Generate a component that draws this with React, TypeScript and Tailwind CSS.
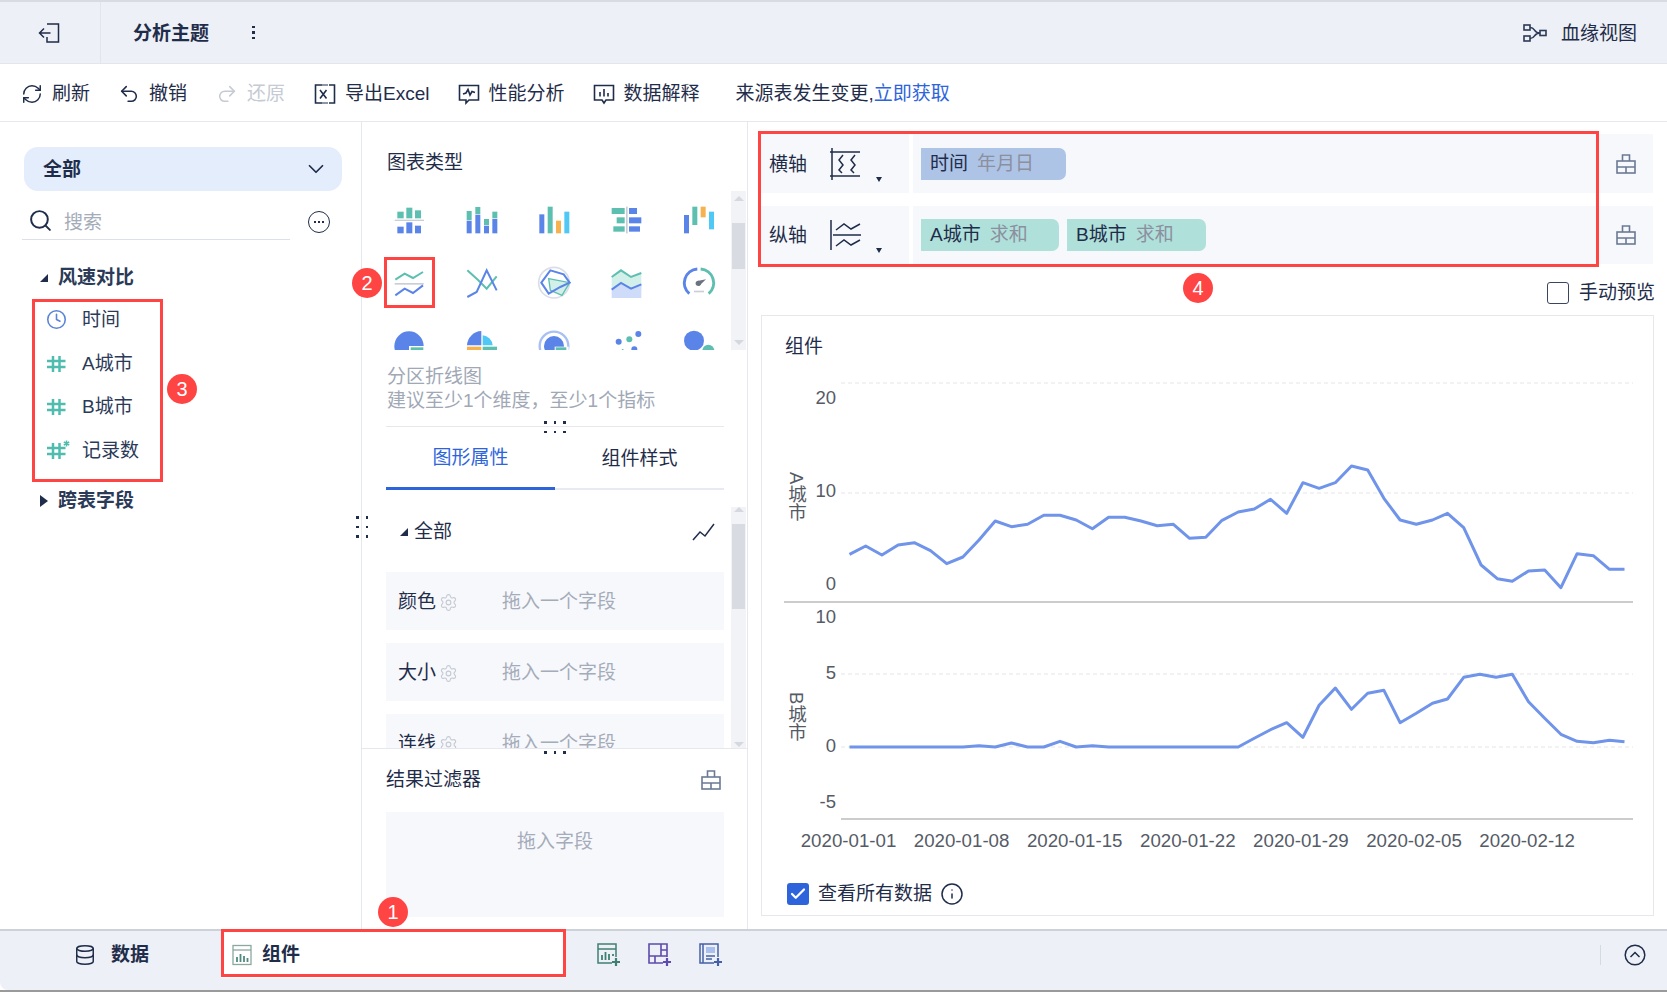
import React from 'react';
import { RefreshCw, Undo2, Redo2, ChevronDown, Search, Clock, Database, Info, Check, Settings } from 'lucide-react';

const BLUE = '#5b84e8';
const TEAL = '#5dbfb0';
const ORANGE = '#f6b24e';
const SKY = '#4fc8f5';

function Ic({ cx, cy, children }: { cx: number; cy: number; children: React.ReactNode }) {
  return (
    <div className="flex items-center justify-center">
      <svg width="40" height="40" viewBox={`${cx - 60} ${cy - 60} 120 120`} fill="none">
        {children}
      </svg>
    </div>
  );
}

function R({ x, y, x2, y2, c }: { x: number; y: number; x2: number; y2: number; c: string }) {
  return <rect x={x} y={y} width={x2 - x} height={y2 - y} fill={c} />;
}

const chartIcons = (
  <>
    <Ic cx={148} cy={270}>
      <R x={113} y={245} x2={132} y2={265} c={TEAL} />
      <R x={140} y={233} x2={158} y2={265} c={TEAL} />
      <R x={166} y={241} x2={184} y2={265} c={TEAL} />
      <R x={105} y={269} x2={193} y2={273} c="#c9ced8" />
      <R x={113} y={290} x2={132} y2={310} c={BLUE} />
      <R x={140} y={277} x2={158} y2={310} c={BLUE} />
      <R x={166} y={287} x2={184} y2={310} c={BLUE} />
    </Ic>
    <Ic cx={366} cy={270}>
      <R x={320} y={243} x2={335} y2={270} c={TEAL} />
      <R x={320} y={272} x2={335} y2={310} c={BLUE} />
      <R x={346} y={231} x2={361} y2={252} c={TEAL} />
      <R x={346} y={254} x2={361} y2={310} c={BLUE} />
      <R x={372} y={267} x2={387} y2={285} c={TEAL} />
      <R x={372} y={287} x2={387} y2={310} c={BLUE} />
      <R x={397} y={245} x2={412} y2={265} c={TEAL} />
      <R x={397} y={267} x2={412} y2={310} c={BLUE} />
    </Ic>
    <Ic cx={581} cy={270}>
      <R x={537} y={253} x2={552} y2={310} c={BLUE} />
      <R x={562} y={230} x2={577} y2={310} c={TEAL} />
      <R x={587} y={272} x2={602} y2={310} c={ORANGE} />
      <R x={612} y={245} x2={627} y2={310} c={SKY} />
    </Ic>
    <Ic cx={803} cy={270}>
      <R x={800} y={230} x2={805} y2={310} c="#c9ced8" />
      <R x={757} y={234} x2={796} y2={252} c={TEAL} />
      <R x={772} y={262} x2={796} y2={280} c={TEAL} />
      <R x={762} y={289} x2={796} y2={305} c={TEAL} />
      <R x={809} y={234} x2={833} y2={252} c={BLUE} />
      <R x={809} y={262} x2={846} y2={280} c={BLUE} />
      <R x={809} y={289} x2={842} y2={305} c={BLUE} />
    </Ic>
    <Ic cx={1017} cy={270}>
      <R x={972} y={255} x2={987} y2={310} c={BLUE} />
      <R x={997} y={230} x2={1012} y2={285} c={TEAL} />
      <R x={1022} y={230} x2={1037} y2={262} c={ORANGE} />
      <R x={1047} y={245} x2={1062} y2={298} c={SKY} />
    </Ic>

    <Ic cx={148} cy={458}>
      <polyline points="107,448 135,430 160,443 190,425" stroke={TEAL} strokeWidth="6" />
      <R x={105} y={458} x2={192} y2={463} c="#c9ced8" />
      <polyline points="107,495 135,475 160,488 190,465" stroke={BLUE} strokeWidth="6" />
    </Ic>
    <Ic cx={366} cy={458}>
      <polyline points="322,420 355,450 380,475 410,438" stroke={TEAL} strokeWidth="6" />
      <polyline points="322,500 350,485 380,420 410,480" stroke={BLUE} strokeWidth="6" />
    </Ic>
    <Ic cx={581} cy={458}>
      <circle cx={581} cy={457} r={46} stroke="#d9dee8" strokeWidth="5" />
      <polygon points="565,445 628,457 605,495 570,480" fill="#d3efe9" stroke={TEAL} strokeWidth="4" />
      <polygon points="543,457 570,420 610,432 628,457 600,470 565,490" stroke={BLUE} strokeWidth="6" />
    </Ic>
    <Ic cx={803} cy={458}>
      <polygon points="757,440 785,420 815,440 846,428 846,478 757,478" fill="#d3efe9" />
      <polyline points="757,440 785,420 815,440 846,428" stroke={TEAL} strokeWidth="6" />
      <polygon points="757,478 785,458 815,475 846,462 846,503 757,503" fill="#cfdcf9" />
      <polyline points="757,478 785,458 815,475 846,462" stroke={BLUE} strokeWidth="6" />
    </Ic>
    <Ic cx={1017} cy={458}>
      <path d="M988 490 A42 42 0 0 1 1012 416" stroke={BLUE} strokeWidth="9" />
      <path d="M1022 416 A42 42 0 0 1 1046 490" stroke={TEAL} strokeWidth="9" />
      <circle cx={1015} cy={459} r={8} fill="#6b7280" />
      <path d="M1012 452 L1038 447 L1018 466 Z" fill="#6b7280" />
      <R x={1002} y={481} x2={1032} y2={486} c="#c9ced8" />
    </Ic>

    <Ic cx={148} cy={648}>
      <circle cx={148} cy={648} r={44} fill={BLUE} />
      <rect x={148} y={648} width={46} height={46} fill="#fff" />
      <rect x={153} y={652} width={38} height={30} fill={TEAL} />
    </Ic>
    <Ic cx={366} cy={648}>
      <path d="M364 646 V603 A45 45 0 0 0 321 646 Z" fill={BLUE} />
      <path d="M368 646 V616 A32 32 0 0 1 398 646 Z" fill={SKY} />
      <path d="M321 650 H364 V697 H321 Z" fill={ORANGE} />
      <path d="M368 650 H411 V697 H368 Z" fill={TEAL} />
    </Ic>
    <Ic cx={581} cy={648}>
      <circle cx={581} cy={648} r={43} stroke="#a9c0f3" strokeWidth="7" />
      <circle cx={581} cy={648} r={30} fill={BLUE} />
      <rect x={583} y={650} width={42} height={40} fill="#fff" />
      <rect x={586} y={652} width={32} height={30} fill={TEAL} />
    </Ic>
    <Ic cx={803} cy={648}>
      <circle cx={778} cy={635} r={9} fill={BLUE} />
      <circle cx={810} cy={628} r={9} fill={TEAL} />
      <circle cx={837} cy={612} r={9} fill={BLUE} />
      <circle cx={825} cy={658} r={9} fill={BLUE} />
      <circle cx={790} cy={660} r={3} fill={TEAL} />
    </Ic>
    <Ic cx={1017} cy={648}>
      <circle cx={1002} cy={632} r={30} fill={BLUE} />
      <circle cx={1045} cy={662} r={18} fill={TEAL} />
    </Ic>
  </>
);

function Case({ className = 'text-[#6b7a94]' }: { className?: string }) {
  return (
    <svg width="22" height="22" viewBox="0 0 22 22" fill="none" stroke="currentColor" strokeWidth="1.6" className={className}>
      <rect x="2" y="8" width="18" height="12" />
      <path d="M7.500 8V2h7v6M2 14h18M11 14v6" />
    </svg>
  );
}

function Dots({ cols, rows }: { cols: number; rows: number }) {
  const items = [];
  for (let i = 0; i < cols * rows; i++) items.push(<span key={i} className="w-[2.5px] h-[2.5px] bg-[#1f2d4a]" />);
  return (
    <div className="grid gap-x-[7px] gap-y-[7px]" style={{ gridTemplateColumns: `repeat(${cols}, 2.5px)` }}>
      {items}
    </div>
  );
}

function Scrollbar({ h, top, thumb }: { h: number; top: number; thumb: number }) {
  return (
    <div className="relative w-[15px] shrink-0 bg-[#f2f3f6]" style={{ height: h }}>
      <div className="mx-auto mt-[5px] w-0 h-0 border-x-[5px] border-x-transparent border-b-[5px] border-b-[#d5d8de]" />
      <div className="absolute left-[1px] w-[13px] bg-[#d8dbe1]" style={{ top, height: thumb }} />
      <div className="absolute bottom-[5px] left-[2.5px] w-0 h-0 border-x-[5px] border-x-transparent border-t-[5px] border-t-[#d5d8de]" />
    </div>
  );
}

function ToolIcon({ children }: { children: React.ReactNode }) {
  return (
    <svg width="22" height="22" viewBox="0 0 22 22" fill="none" stroke="#1f2d4a" strokeWidth="1.6">
      {children}
    </svg>
  );
}

function ToolItem({ icon, label, muted, extra }: { icon: React.ReactNode; label: string; muted?: boolean; extra?: string }) {
  return (
    <div className={`flex items-center gap-[9px] ${extra ?? ''}`}>
      <span className="w-[22px] h-[22px] flex items-center justify-center">{icon}</span>
      <span className={muted ? 'text-[#c5cad3]' : ''}>{label}</span>
    </div>
  );
}

function Hash({ star }: { star?: boolean }) {
  return (
    <svg width="24" height="22" viewBox="0 0 24 22" fill="none" stroke="#4fbdae" strokeWidth="2.5">
      <path d="M7 3v16M13.500 3v16M1 8h18.500M1 14h18.500" />
      {star && <path d="M20.500 0.500v6M17.800 2l5.400 3M23.200 2l-5.400 3" strokeWidth="1.500" />}
    </svg>
  );
}

function FieldRow({ icon, label }: { icon: React.ReactNode; label: string }) {
  return (
    <div className="h-[43.8px] flex items-center">
      <span className="ml-[46px] w-[36px] flex items-center">{icon}</span>
      <span className="text-[#2b3a57]">{label}</span>
    </div>
  );
}

function PropRow({ label }: { label: string }) {
  return (
    <div className="h-[58px] shrink-0 bg-[#f7f8fc] flex items-center pl-[12px] pt-[2px]">
      <span className="w-[41px]">{label}</span>
      <Settings size={19} strokeWidth={1.4} className="text-[#c5cad3]" />
      <span className="ml-[44px] text-[#a5acb9]">拖入一个字段</span>
    </div>
  );
}

function Pill({ a, b, w, color }: { a: string; b: string; w: number; color: string }) {
  return (
    <div className="h-[32px] flex items-center pl-[9px] gap-[9px] rounded-r-[7px]" style={{ width: w, backgroundColor: color }}>
      <span>{a}</span>
      <span className="text-[#8b8f9e]">{b}</span>
    </div>
  );
}

function AxisRow({ label, icon, h, children }: { label: string; icon: React.ReactNode; h: number; children: React.ReactNode }) {
  return (
    <div className="flex w-[894px] bg-[#f7f8fc]" style={{ height: h }}>
      <div className="w-[150px] shrink-0 flex items-center pl-[10px] relative">
        <span className="mt-[2px]">{label}</span>
        <span className="ml-[23px]">{icon}</span>
        <span className="absolute left-[117px] bottom-[11px] w-0 h-0 border-x-[3.5px] border-x-transparent border-t-[5px] border-t-[#1f2d4a]" />
      </div>
      <div className="w-[4px] shrink-0 bg-white" />
      <div className="flex-1 flex items-center pl-[8px] gap-[8px]">{children}</div>
      <div className="w-[54px] shrink-0 flex items-center justify-center">
        <Case />
      </div>
    </div>
  );
}

const dataA: [number, number][] = [
  [153, 703], [181, 678], [209, 705], [237, 675], [265, 668], [293, 692], [321, 731], [349, 711], [377, 660], [405, 603],
  [433, 620], [461, 613], [489, 586], [517, 586], [545, 600], [573, 626], [601, 592], [629, 592], [657, 603], [685, 617],
  [713, 613], [741, 655], [769, 652], [797, 601], [825, 576], [853, 567], [881, 538], [909, 580], [937, 488], [965, 505],
  [993, 488], [1021, 438], [1049, 450], [1077, 535], [1105, 600], [1133, 613], [1161, 600], [1187, 580], [1215, 623], [1245, 735],
  [1273, 776], [1299, 784], [1327, 753], [1355, 750], [1383, 803], [1411, 701], [1439, 707], [1467, 748], [1493, 748],
];
const dataB: [number, number][] = [
  [153, 441], [349, 441], [377, 437], [405, 441], [433, 429], [461, 441], [489, 441], [517, 424], [545, 441], [573, 437],
  [601, 441], [825, 441], [853, 415], [881, 389], [909, 368], [937, 412], [965, 316], [993, 264], [1021, 328], [1049, 280],
  [1077, 271], [1105, 368], [1133, 340], [1161, 310], [1187, 297], [1215, 232], [1243, 223], [1271, 232], [1299, 223], [1327, 305],
  [1355, 355], [1383, 403], [1411, 424], [1439, 428], [1467, 421], [1493, 425],
];
const fx = (x: number) => 760 + x / 1.729;
const ptsA = dataA.map(([x, y]) => `${fx(x).toFixed(1)},${(320 + y / 3).toFixed(1)}`).join(' ');
const ptsB = dataB.map(([x, y]) => `${fx(x).toFixed(1)},${(600 + y / 3).toFixed(1)}`).join(' ');
const dates = ['2020-01-01', '2020-01-08', '2020-01-15', '2020-01-22', '2020-01-29', '2020-02-05', '2020-02-12'];

function Chart() {
  const tick = (t: string, y: number) => (
    <text key={t + y} x={835} y={y + 6.5} textAnchor="end" fontSize="18.5" fill="#555b66">
      {t}
    </text>
  );
  const grid = (y: number) => <line key={y} x1={840} x2={1632} y1={y} y2={y} stroke="#e6e6e6" strokeWidth="1.2" strokeDasharray="4 3" />;
  return (
    <svg width="893" height="505" viewBox="761 365 893 505" className="block" fill="none" fontFamily="'Liberation Sans','Noto Sans CJK SC',sans-serif">
      {[383, 493, 674, 747].map(grid)}
      <line x1={783} x2={1632} y1={602} y2={602} stroke="#cccccc" strokeWidth="2" />
      <line x1={840} x2={1632} y1={819} y2={819} stroke="#cccccc" strokeWidth="2" />
      {tick('20', 397)}
      {tick('10', 490)}
      {tick('0', 583)}
      {tick('10', 616)}
      {tick('5', 672)}
      {tick('0', 745)}
      {tick('-5', 801)}
      <text x={795} y={472} fontSize="18.5" fill="#555b66" className="[writing-mode:vertical-rl]">A城市</text>
      <text x={795} y={692} fontSize="18.5" fill="#555b66" className="[writing-mode:vertical-rl]">B城市</text>
      <polyline points={ptsA} stroke="#6f94ea" strokeWidth="3" strokeLinejoin="round" />
      <polyline points={ptsB} stroke="#6f94ea" strokeWidth="3" strokeLinejoin="round" />
      {dates.map((d, i) => (
        <text key={d} x={847.5 + i * 113.1} y={846.5} textAnchor="middle" fontSize="18.7" fill="#555b66">
          {d}
        </text>
      ))}
    </svg>
  );
}

function RedBox({ x, y, w, h }: { x: number; y: number; w: number; h: number }) {
  return <div className="absolute border-[3px] border-[#ff4444] pointer-events-none" style={{ left: x, top: y, width: w, height: h }} />;
}

function Badge({ x, y, n }: { x: number; y: number; n: number }) {
  return (
    <div
      className="absolute w-[30px] h-[30px] rounded-full bg-[#ff4444] text-white flex items-center justify-center text-[20px] pointer-events-none"
      style={{ left: x - 15, top: y - 15 }}
    >
      {n}
    </div>
  );
}

export default function App() {
  return (
    <div className="relative w-[1667px] h-[992px] flex flex-col overflow-hidden bg-white text-[19px] leading-[24px] text-[#1f2d4a] font-['Liberation_Sans','Noto_Sans_CJK_SC',sans-serif]">
      {/* Top bar */}
      <div className="h-[64px] shrink-0 flex items-center bg-[#edf0f6] border-t-2 border-t-[#d8dce2] border-b border-b-[#e1e5ec]">
        <div className="w-[101px] h-full flex items-center justify-center border-r border-r-[#e1e5ec]">
          <svg width="24" height="24" viewBox="0 0 24 24" fill="none" stroke="#1f2d4a" strokeWidth="1.500">
            <path d="M9 3h11.500v18H9v-5M1.500 12h11M6 7.500L1.500 12 6 16.500" />
          </svg>
        </div>
        <span className="ml-[32px] mt-[2px] font-bold">分析主题</span>
        <div className="ml-[43px] flex flex-col gap-[3px]">
          <span className="w-[2.5px] h-[2.5px] bg-[#1f2d4a]" />
          <span className="w-[2.5px] h-[2.5px] bg-[#1f2d4a]" />
          <span className="w-[2.500px] h-[2.5px] bg-[#1f2d4a]" />
        </div>
        <div className="ml-auto mr-[30px] flex items-center gap-[14px]">
          <svg width="24" height="20" viewBox="0 0 24 20" fill="none" stroke="#2b3a57" strokeWidth="1.6">
            <rect x="1" y="2" width="6" height="5" />
            <rect x="1" y="13" width="6" height="5" />
            <rect x="17" y="7.500" width="6" height="5" />
            <path d="M7 4.500c6 0 3 5.500 10 5.500M7 15.500c6 0 3-5.500 10-5.500" />
          </svg>
          <span className="mt-[2px]">血缘视图</span>
        </div>
      </div>

      {/* Toolbar */}
      <div className="h-[58px] shrink-0 flex items-center gap-[28px] pl-[21px] pt-[3px] border-b border-b-[#e6e8ee]">
        <ToolItem icon={<RefreshCw size={24} strokeWidth={1.6} />} label="刷新" />
        <ToolItem icon={<Undo2 size={24} strokeWidth={1.7} />} label="撤销" />
        <ToolItem icon={<Redo2 size={24} strokeWidth={1.7} className="text-[#c5cad3]" />} label="还原" muted extra="ml-[1px]" />
        <ToolItem
          icon={
            <ToolIcon>
              <path d="M8 2H1.500v18H8M15 2h5.500v18H15" />
              <path d="M6 7l6.500 8.500M12.500 7L6 15.500" />
              <path d="M8 2h6M8 20h6" strokeWidth="1" />
            </ToolIcon>
          }
          label="导出Excel"
          extra="ml-[1px]"
        />
        <ToolItem
          icon={
            <ToolIcon>
              <path d="M1.500 2.500h19v14.500h-9.500l-3 3v-3H1.500z" />
              <path d="M5 11l3-1 2-3.500 2 5.500 2-3.500 3 1" />
            </ToolIcon>
          }
          label="性能分析"
        />
        <ToolItem
          icon={
            <ToolIcon>
              <path d="M1.500 2.500h19v14.500h-7.500l-2 3-2-3H1.500z" />
              <path d="M7 9v4.500M11 6v7.500M15 10v3.500" />
            </ToolIcon>
          }
          label="数据解释"
        />
        <span className="ml-[8px]">
          来源表发生变更,<span className="text-[#2d64dc]">立即获取</span>
        </span>
      </div>

      {/* Main */}
      <div className="flex-1 min-h-0 flex">
        {/* Left */}
        <div className="relative w-[362px] shrink-0 border-r border-r-[#e6e8ee] pt-[25px]">
          <div className="ml-[24px] w-[318px] h-[44px] rounded-[14px] bg-[#e4edfc] flex items-center justify-between pl-[19px] pr-[13px]">
            <span className="font-bold mt-[2px]">全部</span>
            <ChevronDown size={26} strokeWidth={1.6} />
          </div>
          <div className="flex items-center mt-[9px]">
            <div className="ml-[22px] w-[268px] h-[40px] border-b border-b-[#dde0e8] flex items-center pl-[6px] gap-[11px]">
              <Search size={25} strokeWidth={1.9} className="mt-[2px]" />
              <span className="text-[#a5acb9] mt-[6px]">搜索</span>
            </div>
            <div className="ml-[18px] mt-[4px] w-[22px] h-[22px] rounded-full border-[1.5px] border-[#1f2d4a] flex items-center justify-center gap-[2px]">
              <span className="w-[2px] h-[2px] bg-[#1f2d4a]" />
              <span className="w-[2px] h-[2px] bg-[#1f2d4a]" />
              <span className="w-[2px] h-[2px] bg-[#1f2d4a]" />
            </div>
          </div>
          <div className="mt-[18px] h-[40px] flex items-center">
            <span className="ml-[40px] w-0 h-0 border-l-[8px] border-l-transparent border-b-[8px] border-b-[#1f2d4a]" />
            <span className="ml-[10px] font-bold text-[#2b3a57]">风速对比</span>
          </div>
          <FieldRow icon={<Clock size={21} strokeWidth={1.8} className="text-[#5b84d8]" />} label="时间" />
          <FieldRow icon={<Hash />} label="A城市" />
          <FieldRow icon={<Hash />} label="B城市" />
          <FieldRow icon={<Hash star />} label="记录数" />
          <div className="mt-[6px] h-[44px] flex items-center">
            <span className="ml-[40px] w-0 h-0 border-y-[6px] border-y-transparent border-l-[8px] border-l-[#1f2d4a]" />
            <span className="ml-[10px] font-bold text-[#2b3a57]">跨表字段</span>
          </div>
          <div className="absolute left-[356px] top-[394px]">
            <Dots cols={2} rows={3} />
          </div>
        </div>

        {/* Middle */}
        <div className="relative w-[386px] shrink-0 border-r border-r-[#e6e8ee] flex flex-col">
          <div className="h-[69px] shrink-0 pl-[25px] pt-[29px]">图表类型</div>
          <div className="h-[159px] shrink-0 flex">
            <div className="w-[369px] h-[159px] overflow-hidden pl-[11px]">
              <div className="-mt-[3px] grid grid-cols-[repeat(5,72.5px)] auto-rows-[63px]">{chartIcons}</div>
            </div>
            <Scrollbar h={159} top={32} thumb={46} />
          </div>
          <div className="h-[76px] shrink-0 pl-[25px] pt-[15px] text-[#a0a8b6]">
            <div>分区折线图</div>
            <div>建议至少1个维度，至少1个指标</div>
          </div>
          <div className="ml-[24px] w-[338px] border-t border-t-[#e6e8ee] shrink-0" />
          <div className="absolute left-[182px] top-[299px]">
            <div className="grid grid-cols-[repeat(3,2.5px)] gap-x-[7px] gap-y-[7px]">
              {[0, 1, 2, 3, 4, 5].map((i) => (
                <span key={i} className="w-[2.5px] h-[2.5px] bg-[#1f2d4a]" />
              ))}
            </div>
          </div>
          <div className="ml-[24px] w-[338px] h-[63px] shrink-0 flex border-b-2 border-b-[#e8eaf2]">
            <div className="w-[169px] h-[63px] pt-[2px] flex items-center justify-center border-b-[3px] border-b-[#2d64dc] text-[#2d64dc]">图形属性</div>
            <div className="w-[169px] h-[61px] pt-[3px] flex items-center justify-center">组件样式</div>
          </div>
          <div className="h-[258px] shrink-0 flex overflow-hidden">
            <div className="ml-[24px] w-[338px] flex flex-col gap-[13px] overflow-hidden">
              <div className="h-[69px] shrink-0 flex items-center pl-[14px] pr-[8px] pt-[15px]">
                <span className="w-0 h-0 border-l-[8px] border-l-transparent border-b-[8px] border-b-[#1f2d4a]" />
                <span className="ml-[6px]">全部</span>
                <svg width="24" height="20" viewBox="0 0 24 20" fill="none" stroke="#1f2d4a" strokeWidth="1.5" className="ml-auto">
                  <path d="M1 18l7-8 5 4L22 2" />
                </svg>
              </div>
              <PropRow label="颜色" />
              <PropRow label="大小" />
              <PropRow label="连线" />
            </div>
            <div className="ml-[7px] mt-[12px]">
              <Scrollbar h={245} top={17} thumb={85} />
            </div>
          </div>
          <div className="flex-1 min-h-0 border-t border-t-[#e6e8ee] relative">
            <div className="ml-[24px] w-[338px] h-[61px] mb-[2px] flex items-center justify-between pr-[2px]">
              <span>结果过滤器</span>
              <Case />
            </div>
            <div className="ml-[24px] w-[338px] h-[105px] bg-[#f7f8fc] flex justify-center pt-[18px] text-[#a5acb9]">拖入字段</div>
            <div className="absolute left-[182px] top-[2px] flex gap-[7px]">
              <span className="w-[2.5px] h-[2.5px] bg-[#1f2d4a]" />
              <span className="w-[2.5px] h-[2.5px] bg-[#1f2d4a]" />
              <span className="w-[2.5px] h-[2.5px] bg-[#1f2d4a]" />
            </div>
          </div>
        </div>

        {/* Right */}
        <div className="flex-1 flex flex-col">
          <div className="pl-[11px] pt-[12px] flex flex-col gap-[13px]">
            <AxisRow
              h={59}
              label="横轴"
              icon={
                <svg width="32" height="34" viewBox="0 0 32 34" fill="none" stroke="#1f2d4a" strokeWidth="1.500">
                  <path d="M2 1v32M0 5h30M0 29h30" />
                  <path d="M13 8l-4 5 4 5-4 5 3 3M25 8l-4 5 4 5-4 5 3 3" />
                </svg>
              }
            >
              <Pill a="时间" b="年月日" w={145} color="#aec4e6" />
            </AxisRow>
            <AxisRow
              h={58}
              label="纵轴"
              icon={
                <svg width="32" height="32" viewBox="0 0 32 32" fill="none" stroke="#1f2d4a" strokeWidth="1.500">
                  <path d="M1 1v30M3 16h28" />
                  <path d="M6 11l8-6 7 5 9-5M6 27l8-6 7 5 9-5" />
                </svg>
              }
            >
              <Pill a="A城市" b="求和" w={138} color="#b0e0da" />
              <Pill a="B城市" b="求和" w={139} color="#b0e0da" />
            </AxisRow>
          </div>
          <div className="h-[51px] shrink-0 flex items-center justify-end pr-[12px] pt-[6px]">
            <span className="w-[22px] h-[22px] rounded-[3px] border-[1.5px] border-[#3a465f] mr-[10px]" />
            <span>手动预览</span>
          </div>
          <div className="ml-[13px] w-[893px] h-[601px] border border-[#e8e8ec] flex flex-col">
            <div className="h-[49px] shrink-0 pl-[23px] pt-[19px]">组件</div>
            <Chart />
            <div className="flex items-center mt-[12px] pl-[25px]">
              <span className="w-[22px] h-[22px] rounded-[3px] bg-[#2d64dc] flex items-center justify-center">
                <Check size={18} strokeWidth={3} className="text-white" />
              </span>
              <span className="ml-[9px]">查看所有数据</span>
              <Info size={24} strokeWidth={1.5} className="ml-[8px]" />
            </div>
          </div>
        </div>
      </div>

      {/* Bottom */}
      <div className="h-[61px] shrink-0 flex bg-[#edf0f6] border-t-2 border-t-[#cdd2da] rounded-bl-[8px]">
        <div className="w-[221px] h-[47px] flex items-center pl-[74px] gap-[15px] font-bold">
          <Database size={22} strokeWidth={1.6} />
          <span>数据</span>
        </div>
        <div className="w-[345px] h-[47px] bg-white flex items-center pl-[11px] gap-[10px] font-bold">
          <svg width="20" height="22" viewBox="0 0 20 22" fill="none" stroke="#4f8a7e" strokeWidth="1.3">
            <rect x="1" y="1.500" width="18" height="19" stroke="#8aa8a0" />
            <path d="M1 6h18" stroke="#8aa8a0" />
            <path d="M5 18v-5M8.500 18v-8M12 18v-6M15.500 18v-4" strokeWidth="1.800" />
          </svg>
          <span>组件</span>
        </div>
        <div className="ml-[31px] h-[47px] flex items-center gap-[27px]">
          <svg width="24" height="24" viewBox="0 0 24 24" fill="none" stroke="#3f8072" strokeWidth="1.500">
            <path d="M15 20H1V1h18v13M1 6h18" />
            <path d="M5 17v-5M8.500 17v-8M12 17v-6M16 13v-2" strokeWidth="1.800" />
            <path d="M19 15v8M15 19h8" strokeWidth="2.200" />
          </svg>
          <svg width="24" height="24" viewBox="0 0 24 24" fill="none" stroke="#5d4bad" strokeWidth="1.600">
            <path d="M15 20H1V1h18v13M1 13h18M13 1v12M13 7h6M7 13v7" />
            <path d="M19 15v8M15 19h8" strokeWidth="2.200" />
          </svg>
          <svg width="24" height="24" viewBox="0 0 24 24" fill="none" stroke="#4560a8" strokeWidth="1.500">
            <path d="M15 20H1V1h18v13M4 1v19" />
            <rect x="7" y="4" width="9" height="6" fill="#a9c0ee" stroke="none" />
            <path d="M7 13h9M7 16h6" />
            <path d="M19 15v8M15 19h8" strokeWidth="2.200" />
          </svg>
        </div>
        <div className="ml-auto mr-[21px] h-[47px] flex items-center">
          <span className="w-px h-[20px] bg-[#d5d9e0] mr-[23px]" />
          <svg width="22" height="22" viewBox="0 0 22 22" fill="none" stroke="#1f2d4a" strokeWidth="1.500">
            <circle cx="11" cy="11" r="9.800" />
            <path d="M6.500 13l4.500-4.500 4.500 4.500" />
          </svg>
        </div>
      </div>
      <div className="h-[2px] shrink-0 bg-[#9a9a9a]" />

      {/* Annotations */}
      <RedBox x={221} y={929} w={345} h={48} />
      <RedBox x={384} y={257} w={51} h={51} />
      <RedBox x={32} y={299} w={131} h={183} />
      <RedBox x={758} y={131} w={841} h={136} />
      <Badge x={393} y={912} n={1} />
      <Badge x={367} y={283} n={2} />
      <Badge x={182} y={389} n={3} />
      <Badge x={1198} y={288} n={4} />
    </div>
  );
}
